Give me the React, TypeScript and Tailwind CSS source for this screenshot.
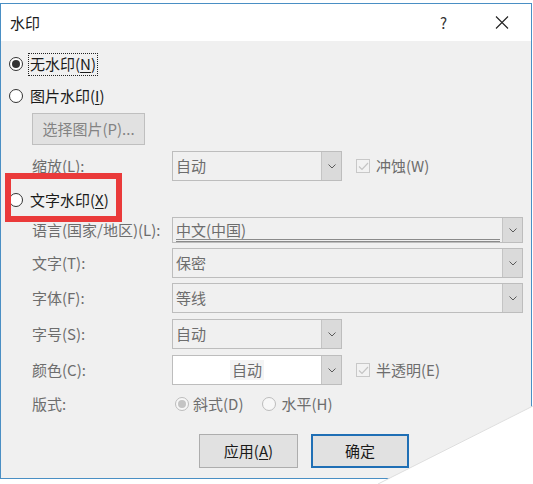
import React from "react";

const gray = "text-[#6d6d6d]";

function Chevron() {
  return (
    <svg width="8" height="5" viewBox="0 0 8 5">
      <path d="M0.5 0.5 L4 4 L7.5 0.5" fill="none" stroke="#5a5a5a" strokeWidth="1" />
    </svg>
  );
}

function Combo({
  value,
  wide,
  white,
  center,
  underline,
  short,
}: {
  value: string;
  wide?: boolean;
  white?: boolean;
  center?: boolean;
  underline?: boolean;
  short?: boolean;
}) {
  return (
    <div
      className={`flex border border-[#bdbdbd] ${wide ? "w-[351px]" : "w-[170px]"} ${short ? "h-[26px]" : "h-[30px]"}`}
    >
      <div
        className={`flex-1 flex items-center ${white ? "bg-white" : "bg-[#f0f0f0]"} ${center ? "justify-center" : "pl-[3px]"} ${gray}`}
      >
        {underline ? (
          <div className="w-full mr-[2px] mt-[2px] border-b-[3px] border-double border-[#8a8a8a] leading-[19px]">
            {value}
          </div>
        ) : (
          <span className={center ? "bg-[#f4f4f4] px-[2px]" : ""}>{value}</span>
        )}
      </div>
      <div className="w-[20px] flex items-center justify-center bg-[#dadada] border-l border-[#c4c4c4]">
        <Chevron />
      </div>
    </div>
  );
}

function Radio({ checked, disabled }: { checked?: boolean; disabled?: boolean }) {
  return (
    <div
      className={`w-[14px] h-[14px] rounded-full border flex items-center justify-center shrink-0 ${
        disabled ? "border-[#bcbcbc] bg-[#f7f7f7]" : "border-[#333333] bg-white"
      }`}
    >
      {checked && (
        <div className={`w-[8px] h-[8px] rounded-full ${disabled ? "bg-[#c4c4c4]" : "bg-[#333333]"}`} />
      )}
    </div>
  );
}

function Check() {
  return (
    <div className="w-[14px] h-[14px] border border-[#c8c8c8] bg-[#f2f2f2] flex items-center justify-center shrink-0">
      <svg width="11" height="9" viewBox="0 0 11 9">
        <path d="M1 4.5 L4 7.5 L10 1" fill="none" stroke="#c4c4c4" strokeWidth="1.2" />
      </svg>
    </div>
  );
}

function Label({ children }: { children: React.ReactNode }) {
  return <div className={`w-[171px] pl-[31px] shrink-0 ${gray}`}>{children}</div>;
}

export default function App() {
  return (
    <div className="relative w-[533px] h-[484px] bg-white overflow-hidden font-['Noto_Sans_CJK_SC',sans-serif] text-[15px] leading-[20px] text-[#1a1a1a]">
      <div className="mt-[3px] w-[532px] h-[476px] border border-[#4a8fc4] flex flex-col">
        {/* title bar */}
        <div className="h-[37px] bg-white flex items-center pl-[9px] shrink-0">
          <span>水印</span>
          <span className="ml-auto text-[#333]">?</span>
          <svg className="ml-[48px] mr-[22px]" width="14" height="13" viewBox="0 0 14 13">
            <path d="M1 0.5 L13 12.5 M13 0.5 L1 12.5" stroke="#222" strokeWidth="1.1" />
          </svg>
        </div>

        {/* body */}
        <div className="flex-1 bg-[#f0f0f0] flex flex-col">
          <div className="flex items-center h-[24px] mt-[11px] pl-[8px]">
            <Radio checked />
            <span className="ml-[5px] h-[23px] flex items-center border border-dotted border-[#222] px-[1px]">
              无水印(<span className="underline underline-offset-2">N</span>)
            </span>
          </div>

          <div className="flex items-center h-[24px] mt-[8px] pl-[8px]">
            <Radio />
            <span className="ml-[5px] border border-transparent px-[1px]">
              图片水印(<span className="underline underline-offset-2">I</span>)
            </span>
          </div>

          <div className="mt-[5px] pl-[31px]">
            <div className="w-[113px] h-[32px] border border-[#bfbfbf] bg-[#e1e1e1] flex items-center justify-center text-[#838383]">
              选择图片(P)...
            </div>
          </div>

          <div className="flex items-center h-[30px] mt-[6px]">
            <Label>缩放(L):</Label>
            <Combo value="自动" />
            <div className="ml-[14px]">
              <Check />
            </div>
            <span className={`ml-[6px] ${gray}`}>冲蚀(W)</span>
          </div>

          <div className="relative flex items-center h-[24px] mt-[7px] pl-[8px]">
            <Radio />
            <span className="ml-[5px] border border-transparent px-[1px]">
              文字水印(<span className="underline underline-offset-2">X</span>)
            </span>
            <div className="absolute left-[4px] top-[-15px] w-[117px] h-[49px] border-[6px] border-[#ea3a3a]" />
          </div>

          <div className="flex items-center h-[26px] mt-[5px]">
            <Label>语言(国家/地区)(L):</Label>
            <Combo value="中文(中国)" wide underline short />
          </div>

          <div className="flex items-center h-[30px] mt-[5px]">
            <Label>文字(T):</Label>
            <Combo value="保密" wide />
          </div>

          <div className="flex items-center h-[30px] mt-[5px]">
            <Label>字体(F):</Label>
            <Combo value="等线" wide />
          </div>

          <div className="flex items-center h-[30px] mt-[6px]">
            <Label>字号(S):</Label>
            <Combo value="自动" />
          </div>

          <div className="flex items-center h-[30px] mt-[6px]">
            <Label>颜色(C):</Label>
            <Combo value="自动" white center />
            <div className="ml-[14px]">
              <Check />
            </div>
            <span className={`ml-[6px] ${gray}`}>半透明(E)</span>
          </div>

          <div className="flex items-center h-[24px] mt-[7px]">
            <div className="w-[174px] pl-[31px] shrink-0 text-[#6d6d6d]">版式:</div>
            <Radio checked disabled />
            <span className={`ml-[4px] ${gray}`}>斜式(D)</span>
            <div className="ml-[19px]">
              <Radio disabled />
            </div>
            <span className={`ml-[5px] ${gray}`}>水平(H)</span>
          </div>

          <div className="flex items-center mt-[18px] pl-[198px] gap-[13px]">
            <div className="w-[99px] h-[34px] border border-[#adadad] bg-[#e1e1e1] flex items-center justify-center">
              应用(<span className="underline underline-offset-2">A</span>)
            </div>
            <div className="w-[98px] h-[34px] border-2 border-[#1f6fb5] bg-[#e1e1e1] flex items-center justify-center">
              确定
            </div>
          </div>
        </div>
      </div>

      {/* torn corner */}
      <svg className="absolute left-0 top-0" width="533" height="484" viewBox="0 0 533 484">
        <polygon points="378,484 533,406 533,484" fill="#ffffff" />
        <line x1="378" y1="484" x2="533" y2="406" stroke="#dedede" strokeWidth="1" />
      </svg>
    </div>
  );
}
